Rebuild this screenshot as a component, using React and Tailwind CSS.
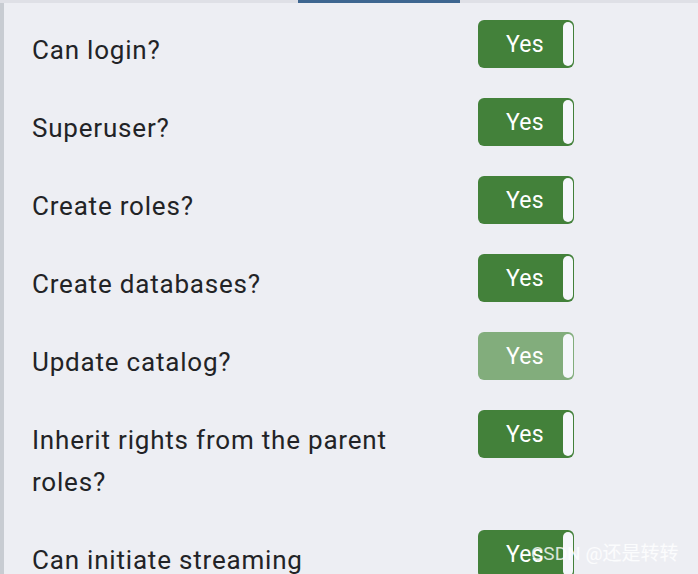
const ROWS = [
  { label: 'Can login?', on: true },
  { label: 'Superuser?', on: true },
  { label: 'Create roles?', on: true },
  { label: 'Create databases?', on: true },
  { label: 'Update catalog?', on: true, disabled: true },
  { label: 'Inherit rights from the parent roles?', on: true },
  { label: 'Can initiate streaming replication and backups?', on: true },
]

function Toggle({ disabled }) {
  return (
    <div
      className={`relative w-[96px] h-[48px] rounded-[6px] flex-shrink-0 ${
        disabled ? 'bg-[#82ad7c]' : 'bg-[#43813a]'
      }`}
    >
      <span className="absolute left-0 right-[2px] top-[3px] bottom-0 flex items-center justify-center text-white text-[23px] tracking-[0.3px]">
        Yes
      </span>
      <span className="absolute right-[1px] top-[2px] bottom-[2px] w-[10px] rounded-full bg-[#f5f7fb]" />
    </div>
  )
}

export default function App() {
  return (
    <div
      className="w-[698px] h-[574px] overflow-hidden bg-[#edeef3] flex flex-col"
      style={{ fontFamily: 'Roboto, "Noto Sans CJK SC", sans-serif' }}
    >
      {/* tab strip */}
      <div className="h-[3px] bg-[#dfe0e6] flex flex-shrink-0">
        <div className="w-[298px]" />
        <div className="w-[162px] bg-[#3e6690]" />
      </div>

      <div className="flex flex-1 relative">
        <div className="w-[4px] bg-[#c8ccd2] flex-shrink-0" />
        <div className="flex-1 pl-[28px] pt-[17px] flex flex-col gap-[27px]">
          {ROWS.map((r, i) => (
            <div key={i} className="flex items-start">
              <div className="w-[446px] pt-[9px] pr-[60px] text-[26px] tracking-[0.8px] leading-[42px] text-[#222326]">
                {r.label}
              </div>
              <Toggle disabled={r.disabled} />
            </div>
          ))}
        </div>
        <div className="absolute left-[531px] top-[537px] text-[19px] text-white/80 whitespace-nowrap">
          CSDN @还是转转
        </div>
      </div>
    </div>
  )
}
